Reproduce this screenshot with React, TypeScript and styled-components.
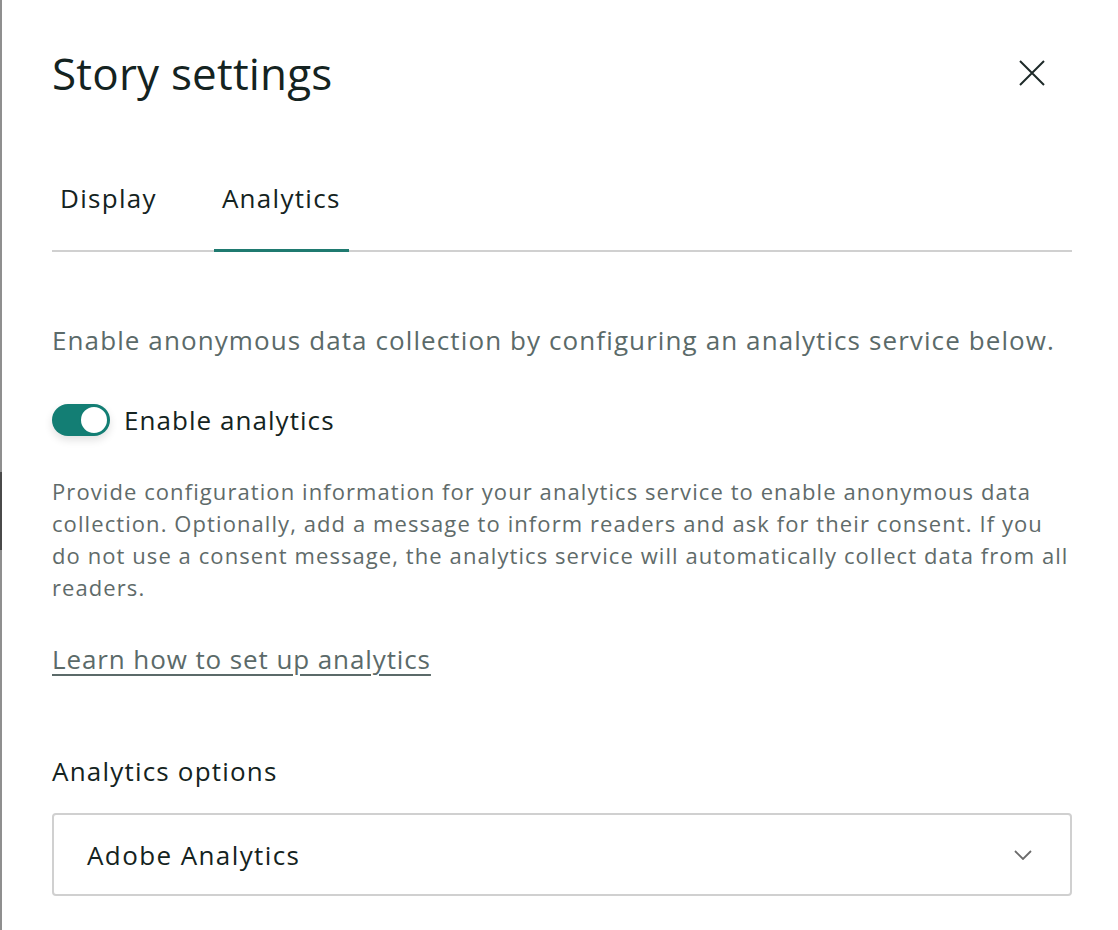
import React, { useState } from 'react';
import styled, { createGlobalStyle } from 'styled-components';

const GlobalStyle = createGlobalStyle`
  html, body {
    margin: 0;
    padding: 0;
    background: #fff;
  }
  body {
    font-family: 'Open Sans', 'Noto Sans', sans-serif;
    color: #142321;
  }
`;

const Panel = styled.div`
  position: relative;
  box-sizing: border-box;
  width: 1118px;
  min-height: 930px;
  border-left: 2px solid #8f8f8f;
  padding: 42px 46px 0 50px;
  background: #fff;

  &::before {
    content: '';
    position: absolute;
    left: -2px;
    top: 472px;
    width: 2px;
    height: 78px;
    background: #4a4a4a;
  }
`;

const Header = styled.div`
  display: flex;
  justify-content: space-between;
  align-items: center;
  height: 62px;
`;

const Title = styled.h1`
  margin: 0;
  font-size: 44px;
  font-weight: 400;
  letter-spacing: 0.2px;
  color: #142321;
`;

const CloseButton = styled.button`
  background: none;
  border: none;
  padding: 0;
  margin-right: 26px;
  width: 28px;
  height: 28px;
  cursor: pointer;
  display: flex;
  align-items: center;
  justify-content: center;
`;

const Tabs = styled.div`
  display: flex;
  margin-top: 76px;
  border-bottom: 2px solid #d0d0d0;
`;

const Tab = styled.button<{ $active?: boolean }>`
  background: none;
  border: none;
  font-family: inherit;
  font-size: 26px;
  font-weight: 500;
  letter-spacing: 1.3px;
  color: #142321;
  padding: 0 8px 33px;
  margin-right: 49px;
  margin-bottom: -2px;
  border-bottom: 3px solid ${({ $active }) => ($active ? '#1f7a70' : 'transparent')};
  cursor: pointer;
`;

const Intro = styled.p`
  margin: 70px 0 0;
  font-size: 26px;
  letter-spacing: 1.1px;
  color: #5b6a69;
  white-space: nowrap;
`;

const ToggleRow = styled.label`
  display: flex;
  align-items: center;
  gap: 14px;
  margin-top: 44px;
  font-size: 26px;
  letter-spacing: 1.05px;
  color: #142321;
  cursor: pointer;
`;

const Track = styled.span<{ $on: boolean }>`
  position: relative;
  width: 58px;
  height: 32px;
  border-radius: 16px;
  background: ${({ $on }) => ($on ? '#137e74' : '#bbb')};
  box-shadow: 0 4px 8px rgba(0, 0, 0, 0.12);
  flex-shrink: 0;
`;

const Thumb = styled.span<{ $on: boolean }>`
  position: absolute;
  top: 1px;
  left: ${({ $on }) => ($on ? '27px' : '1px')};
  width: 26px;
  height: 26px;
  border-radius: 50%;
  background: #fff;
  border: 2px solid #137e74;
`;

const Description = styled.p`
  margin: 37px 0 0;
  font-size: 22px;
  line-height: 32px;
  letter-spacing: 1.08px;
  color: #5f6b6a;
`;

const LearnLink = styled.a`
  display: inline-block;
  margin-top: 38px;
  font-size: 26px;
  letter-spacing: 0.9px;
  color: #5b6a69;
  text-decoration: underline;
  text-underline-offset: 5px;
  text-decoration-thickness: 2px;
  cursor: pointer;
`;

const SectionLabel = styled.div`
  margin-top: 76px;
  font-size: 26px;
  font-weight: 500;
  letter-spacing: 1.2px;
  color: #142321;
`;

const Select = styled.div`
  box-sizing: border-box;
  margin-top: 24px;
  height: 83px;
  border: 2px solid #d0d0d0;
  border-radius: 4px;
  display: flex;
  align-items: center;
  justify-content: space-between;
  padding: 0 38px 0 33px;
  font-size: 26px;
  letter-spacing: 1.4px;
  color: #142321;
  cursor: pointer;
`;

export default function App() {
  const [tab, setTab] = useState('Analytics');
  const [enabled, setEnabled] = useState(true);

  return (
    <>
      <GlobalStyle />
      <Panel>
        <Header>
          <Title>Story settings</Title>
          <CloseButton aria-label="Close">
            <svg width="26" height="26" viewBox="0 0 26 26">
              <path d="M1 1 L25 25 M25 1 L1 25" stroke="#1e2a29" strokeWidth="2" />
            </svg>
          </CloseButton>
        </Header>

        <Tabs>
          {['Display', 'Analytics'].map(t => (
            <Tab key={t} $active={tab === t} onClick={() => setTab(t)}>
              {t}
            </Tab>
          ))}
        </Tabs>

        <Intro>Enable anonymous data collection by configuring an analytics service below.</Intro>

        <ToggleRow onClick={() => setEnabled(!enabled)}>
          <Track $on={enabled}>
            <Thumb $on={enabled} />
          </Track>
          Enable analytics
        </ToggleRow>

        <Description>
          Provide configuration information for your analytics service to enable anonymous data
          collection. Optionally, add a message to inform readers and ask for their consent. If you
          do not use a consent message, the analytics service will automatically collect data from all
          readers.
        </Description>

        <LearnLink>Learn how to set up analytics</LearnLink>

        <SectionLabel>Analytics options</SectionLabel>

        <Select>
          <span>Adobe Analytics</span>
          <svg width="18" height="10" viewBox="0 0 18 10">
            <path d="M1 1 L9 9 L17 1" stroke="#6b6b6b" strokeWidth="1.8" fill="none" />
          </svg>
        </Select>
      </Panel>
    </>
  );
}
